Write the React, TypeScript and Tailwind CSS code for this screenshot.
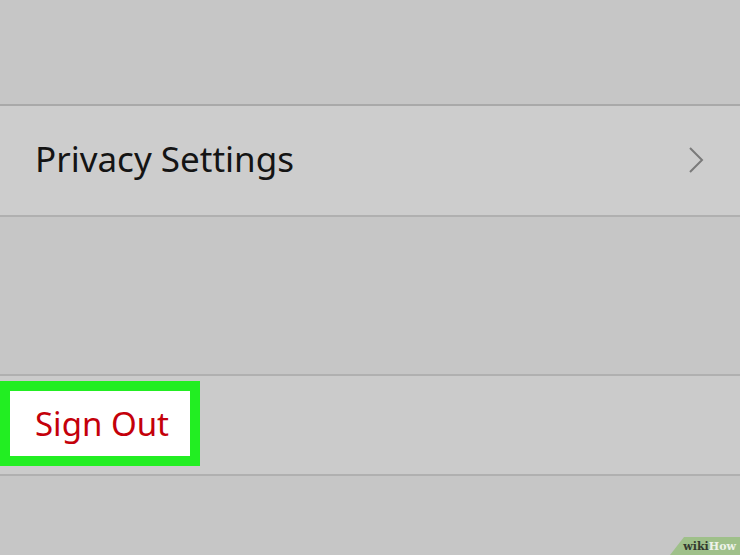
import React from "react";

export default function App() {
  return (
    <div className="relative w-[740px] h-[555px] overflow-hidden bg-[#c6c6c6] flex flex-col" style={{ fontFamily: '"Noto Sans", "Open Sans", sans-serif' }}>
      <div className="h-[104px] shrink-0" />
      <div className="h-[2px] shrink-0 bg-[#a9a9a9]" />
      <div className="h-[109px] shrink-0 bg-[#cdcdcd] flex items-center justify-between pl-[35px] pr-[36px]">
        <span className="text-[35px] leading-none text-[#141414] -mt-[4px]">Privacy Settings</span>
        <svg width="16" height="28" viewBox="0 0 16 28" className="-mt-[2px]">
          <path d="M2 2 L14 14 L2 26" fill="none" stroke="#7a7a7a" strokeWidth="2" />
        </svg>
      </div>
      <div className="h-[2px] shrink-0 bg-[#b0b0b0]" />
      <div className="h-[157px] shrink-0" />
      <div className="h-[2px] shrink-0 bg-[#b0b0b0]" />
      <div className="h-[98px] shrink-0 bg-[#cbcbcb] flex items-start pt-[5px]">
        <div className="w-[200px] h-[85px] bg-[#22ee22] p-[10px]">
          <div className="w-full h-full bg-white flex items-center pl-[25px]">
            <span className="text-[33px] leading-none text-[#c4000a] -mt-[1px]">Sign Out</span>
          </div>
        </div>
      </div>
      <div className="h-[2px] shrink-0 bg-[#b0b0b0]" />
      <div className="flex-1" />
      <div className="absolute right-0 bottom-0 w-[70px] h-[18px] bg-[#9fc08a] flex items-center justify-end pr-[4px]" style={{ clipPath: "polygon(14px 0, 100% 0, 100% 100%, 0 100%)" }}>
        <span className="text-[11px] font-bold leading-none text-[#333a2e]" style={{ fontFamily: '"DejaVu Serif", serif' }}>wiki</span>
        <span className="text-[11px] font-bold leading-none text-[#eef3ea]" style={{ fontFamily: '"DejaVu Serif", serif' }}>How</span>
      </div>
    </div>
  );
}
